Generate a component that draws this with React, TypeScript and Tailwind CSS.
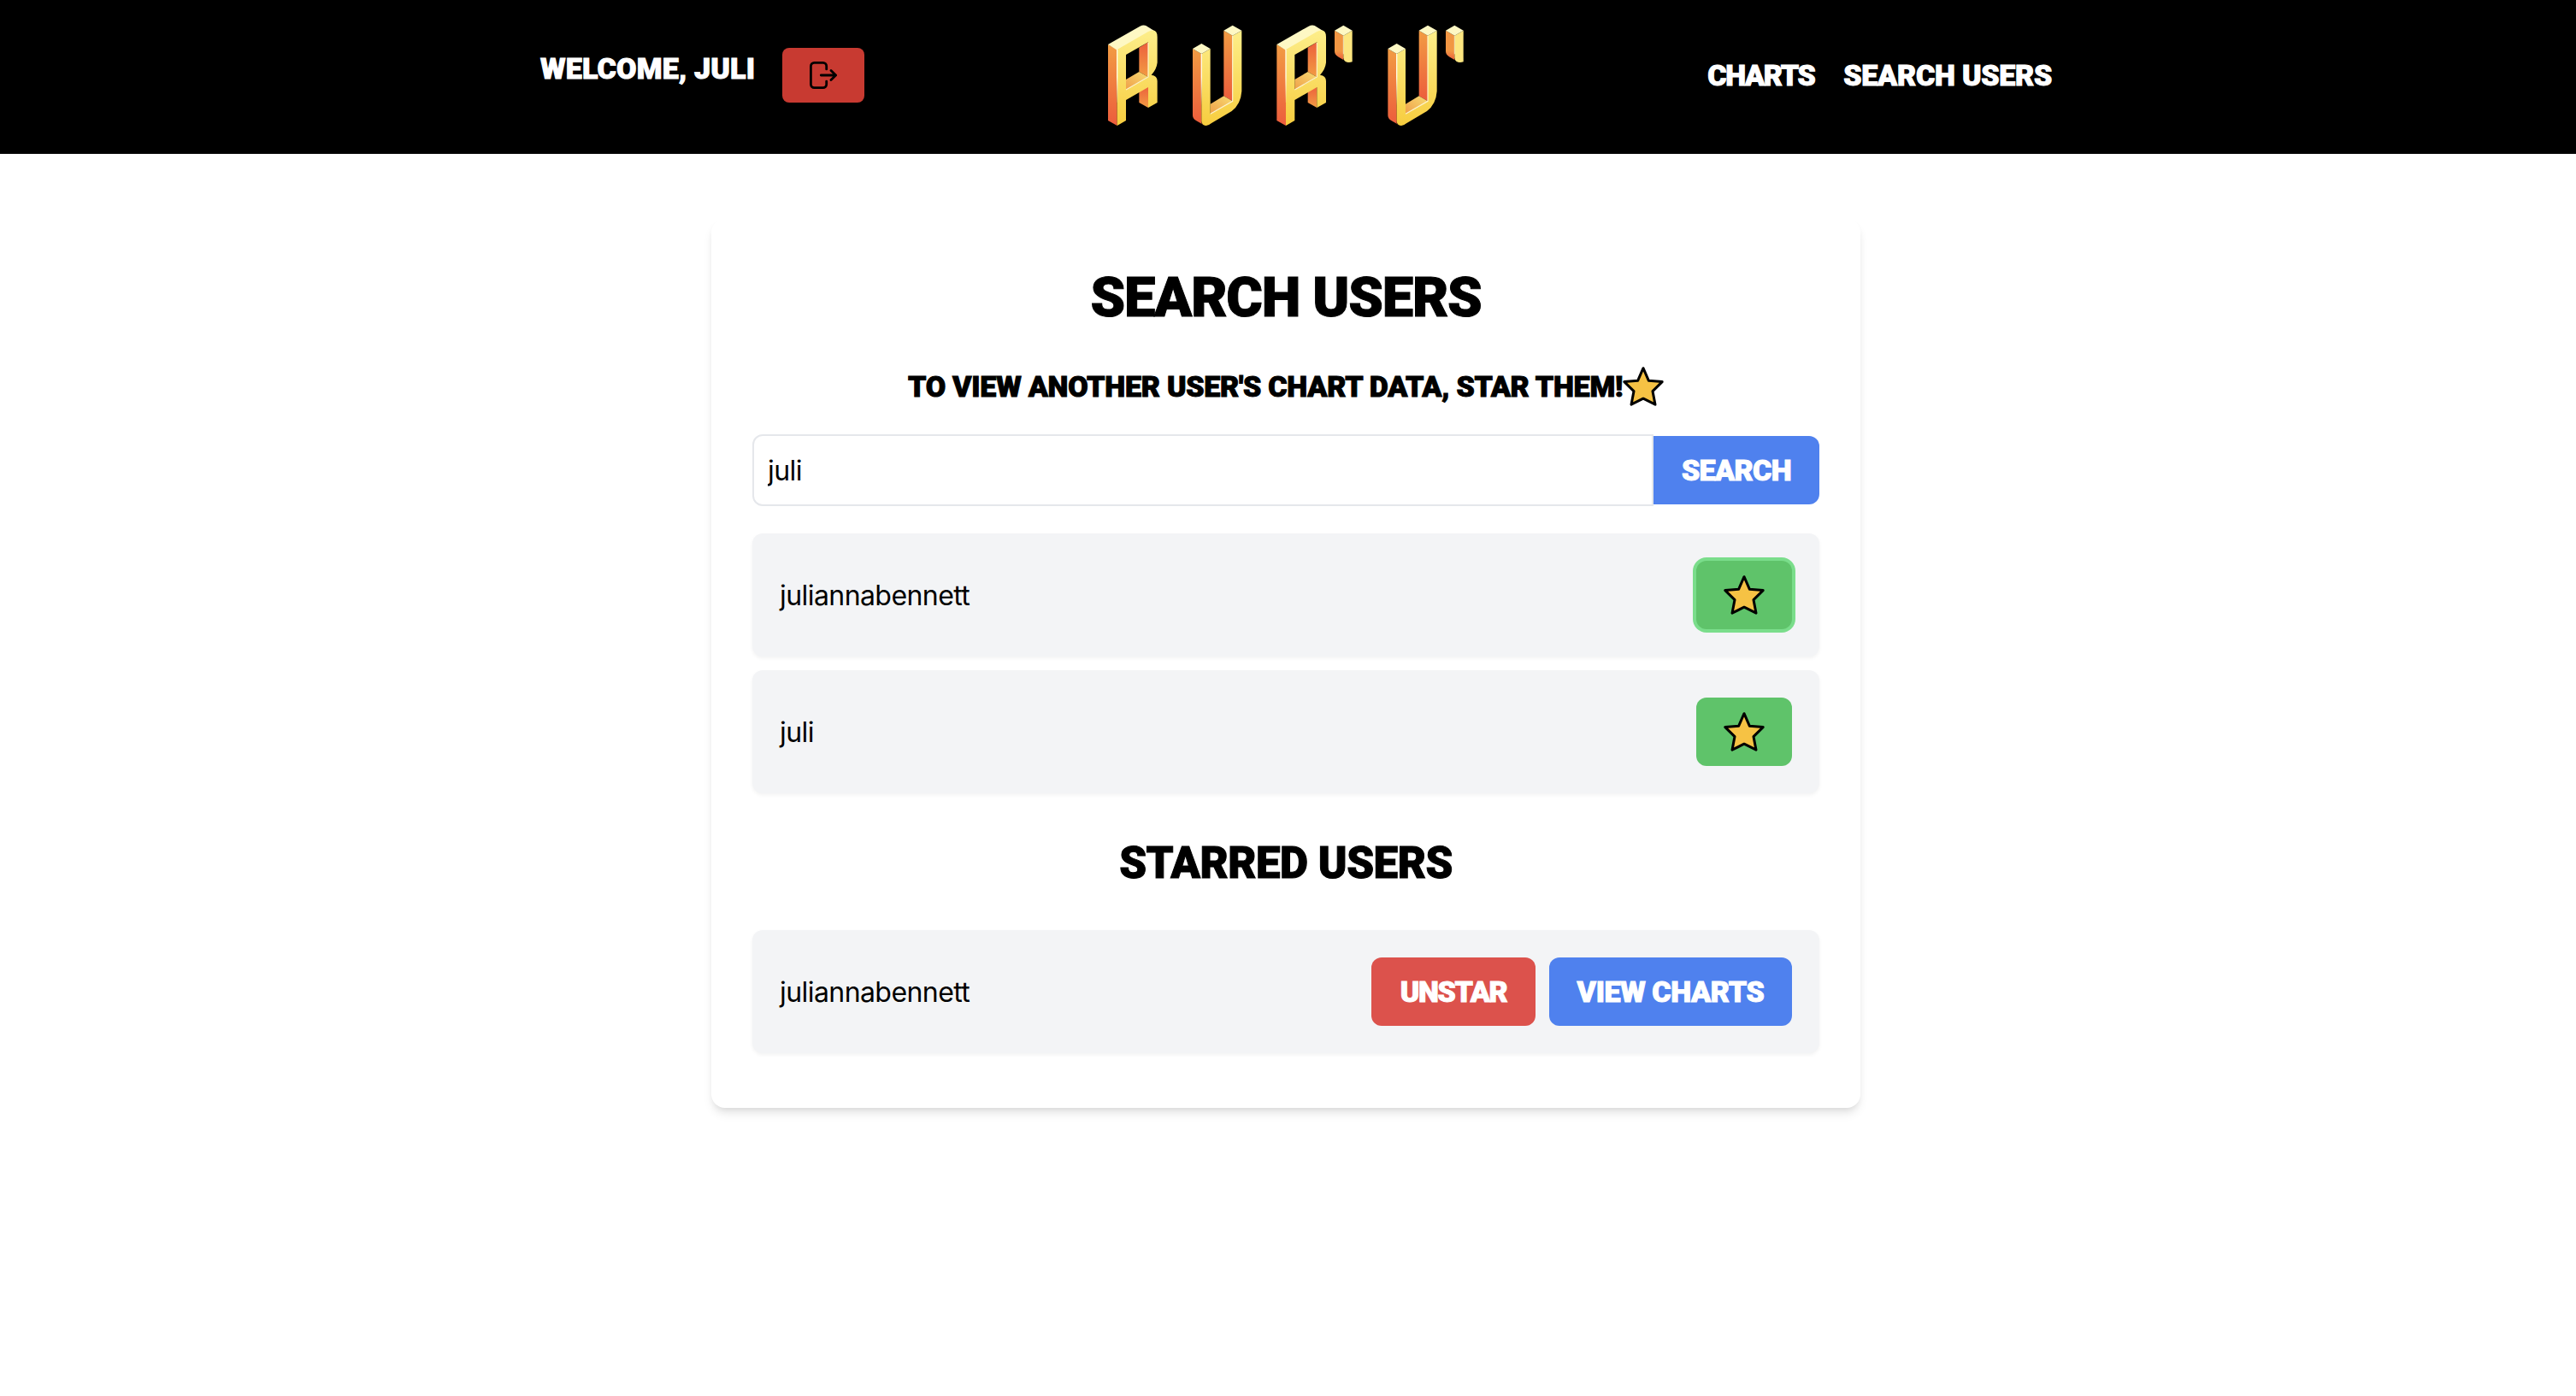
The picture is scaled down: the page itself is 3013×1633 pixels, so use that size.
const display = "font-['Roboto',sans-serif] font-black [-webkit-text-stroke:1px_currentColor]";

function StarIcon() {
  return (
    <svg className="size-12 shrink-0 overflow-visible" viewBox="0 0 48 48" fill="#f6c244" stroke="#000" strokeWidth="3" strokeLinejoin="round">
      <path d="M24 2.7 30.3 17.2 46.2 18.6 35 29.6 38 45.2 24 38.2 10 45.2 13 29.6 1.8 18.6 17.7 17.2Z" />
    </svg>
  );
}

function LogoutIcon() {
  return (
    <svg className="size-8" viewBox="0 0 32 32" fill="none" stroke="#000" strokeWidth="2.8" strokeLinecap="round" strokeLinejoin="round">
      <path d="M19.7 8.9V5.4a4 4 0 0 0-4-4H5.4a4 4 0 0 0-4 4v21.2a4 4 0 0 0 4 4h10.3a4 4 0 0 0 4-4v-3.5" />
      <path d="M13.3 16H30.4M25 10.5l5.6 5.5L25 21.5" />
    </svg>
  );
}

function LetterR() {
  return (
    <>
      <path d="M48 126 80 144V411L48 393Z" fill="url(#side)" />
      <path d="M157 137 189 118V240L157 222Z" fill="url(#inner)" />
      <path d="M111 249 157 222 189 240 111 285Z" fill="url(#floor)" />
      <path d="M157 292 189 272V348L157 330Z" fill="url(#inner)" />
      <path d="M48 126 160 62Q172 56 181 60L210 78 190 86 80 146Z" fill="#fef8c4" />
      <path
        fillRule="evenodd"
        d="M80 144 180 86Q221 62 221 100V190Q218 215 200 233 221 236 221 254V330L189 348V276L111 321V393L80 411ZM111 162V285L189 240V118Z"
        fill="url(#front)"
      />
      <path d="M80 144V330" stroke="url(#shine)" strokeWidth="4" />
      <path d="M189 120V240L111 285" fill="none" stroke="#fff6d0" strokeWidth="3.5" />
    </>
  );
}

function LetterU() {
  return (
    <>
      <path d="M345 141 376 159V403L384 409 358 394Q345 386 345 375Z" fill="url(#side)" />
      <path d="M454 77 485 95V325L454 307Z" fill="url(#side)" />
      <path d="M407 335 454 307 485 325 407 370Z" fill="url(#floor)" />
      <path d="M376 159 407 141V370L485 325V95L517 77V290Q514 335 482 360L410 403Q395 416 382 408 376 403 376 395Z" fill="url(#front)" />
      <path d="M345 141 376 123 407 141 376 159ZM454 77 485 59 517 77 485 95Z" fill="#fef8c4" />
      <path d="M376 159V345" stroke="url(#shine)" strokeWidth="4" />
      <path d="M485 95V325L407 370" fill="none" stroke="#fff6d0" strokeWidth="3.5" />
    </>
  );
}

function Tick() {
  return (
    <>
      <path d="M243 77 274 95V180L257 170Q243 162 243 150Z" fill="url(#tickSide)" />
      <path d="M274 95 305 77V187Q290 192 280 185 274 180 274 172Z" fill="#fce680" />
      <path d="M243 77 274 59 305 77 274 95Z" fill="#fef8c4" />
      <path d="M274 95V160" stroke="#fff6d0" strokeWidth="2.5" />
    </>
  );
}

function Logo() {
  return (
    <svg className="h-[150px] w-[440px]" viewBox="12 0 1320 450">
      <defs>
        <linearGradient id="side" x1="0" y1="0" x2="0" y2="1">
          <stop offset="0" stopColor="#f29c43" />
          <stop offset="1" stopColor="#ec5c3c" />
        </linearGradient>
        <linearGradient id="inner" x1="0" y1="0" x2="0" y2="1">
          <stop offset="0" stopColor="#ec5f3c" />
          <stop offset="1" stopColor="#f29c43" />
        </linearGradient>
        <linearGradient id="tickSide" x1="0" y1="0" x2="0" y2="1">
          <stop offset="0.7" stopColor="#f19643" />
          <stop offset="1" stopColor="#ec5f3c" />
        </linearGradient>
        <linearGradient id="floor" x1="1" y1="0" x2="0" y2="1">
          <stop offset="0" stopColor="#f8dc72" />
          <stop offset="1" stopColor="#ef9f49" />
        </linearGradient>
        <linearGradient id="front" x1="0" y1="0" x2="0" y2="1">
          <stop offset="0" stopColor="#fdee8a" />
          <stop offset="1" stopColor="#f7cd3f" />
        </linearGradient>
        <linearGradient id="shine" gradientUnits="userSpaceOnUse" x1="0" y1="140" x2="0" y2="340">
          <stop offset="0" stopColor="#fffbe6" />
          <stop offset="0.5" stopColor="#fffbe6" />
          <stop offset="1" stopColor="#fffbe6" stopOpacity="0" />
        </linearGradient>
      </defs>
      <LetterR />
      <LetterU />
      <g transform="translate(592 0)">
        <LetterR />
      </g>
      <g transform="translate(600 0)">
        <Tick />
      </g>
      <g transform="translate(685 0)">
        <LetterU />
      </g>
      <g transform="translate(990 0)">
        <Tick />
      </g>
    </svg>
  );
}

function Header() {
  return (
    <header className="h-[180px] bg-black">
      <div className="mx-auto grid w-[1792px] grid-cols-[1fr_auto_1fr] pt-[10px]">
        <div className={`flex items-start pl-6 text-[34px] leading-10 text-white ${display}`}>
          <span className="mt-[50px] w-[283px] whitespace-nowrap tracking-[0.2px]">WELCOME, JULI</span>
          <button className="mt-[46px] rounded-lg bg-[#c83a31] px-8 py-4">
            <LogoutIcon />
          </button>
        </div>
        <Logo />
        <nav className={`mt-[58px] flex justify-end gap-[34px] text-[34px] leading-10 text-white ${display}`}>
          <a className="tracking-[-1.4px]">CHARTS</a>
          <a className="tracking-[-0.25px]">SEARCH USERS</a>
        </nav>
      </div>
    </header>
  );
}

function UserRow({ name, children }: { name: string; children: React.ReactNode }) {
  return (
    <li className="flex h-36 items-center justify-between rounded-xl bg-[#f3f4f6] px-8 shadow-[0_2px_4px_rgba(0,0,0,0.05)]">
      <span className="pt-0.5 font-['Inter',sans-serif] text-[32px] leading-[48px] tracking-[-0.57px]">{name}</span>
      <div className="flex gap-4">{children}</div>
    </li>
  );
}

export default function App() {
  return (
    <div className="min-h-[1633px] w-full overflow-hidden bg-white text-black">
      <div className="w-[3013px] bg-black">
        <div className="w-[3008px]">
          <Header />
        </div>
      </div>
      <main className="w-[3008px] pt-[76px]">
        <section className="mx-auto w-[1344px] rounded-2xl bg-white px-12 pt-12 pb-16 shadow-[0_8px_12px_-2px_rgba(0,0,0,0.1),0_4px_8px_-4px_rgba(0,0,0,0.1)]">
          <h1 className={`pt-0.5 text-center text-[65px] leading-[84px] tracking-[-1.2px] ${display}`}>SEARCH USERS</h1>
          <div className="mt-[38px] flex items-center justify-center">
            <h2 className={`text-[34px] leading-[48px] tracking-[-0.24px] ${display}`}>
              TO VIEW ANOTHER USER'S CHART DATA, STAR THEM!
            </h2>
            <StarIcon />
          </div>
          <div className="mt-8 flex items-center">
            <input
              className="h-[84px] w-[1054px] rounded-l-xl border-2 border-[#e5e7eb] px-4 font-['Inter',sans-serif] text-[32px] tracking-[-0.57px] outline-none"
              defaultValue="juli"
            />
            <button className={`h-20 w-[194px] rounded-r-xl bg-[#4f81ee] text-[34px] tracking-[-0.6px] text-white ${display}`}>SEARCH</button>
          </div>
          <ul className="mt-8 flex flex-col gap-4">
            <UserRow name="juliannabennett">
              <button className="rounded-xl bg-[#5fc36a] px-8 py-4 ring-4 ring-[#7add8b]">
                <StarIcon />
              </button>
            </UserRow>
            <UserRow name="juli">
              <button className="rounded-xl bg-[#5fc36a] px-8 py-4">
                <StarIcon />
              </button>
            </UserRow>
          </ul>
          <h2 className={`mt-[50px] mb-[46px] text-center text-[51px] leading-[64px] tracking-[-0.5px] ${display}`}>STARRED USERS</h2>
          <ul>
            <UserRow name="juliannabennett">
              <button className={`h-20 w-48 rounded-xl bg-[#dc524c] text-[34px] tracking-[-1.3px] text-white ${display}`}>UNSTAR</button>
              <button className={`h-20 w-[284px] rounded-xl bg-[#4f81ee] text-[34px] tracking-[-0.4px] text-white ${display}`}>VIEW CHARTS</button>
            </UserRow>
          </ul>
        </section>
      </main>
    </div>
  );
}
